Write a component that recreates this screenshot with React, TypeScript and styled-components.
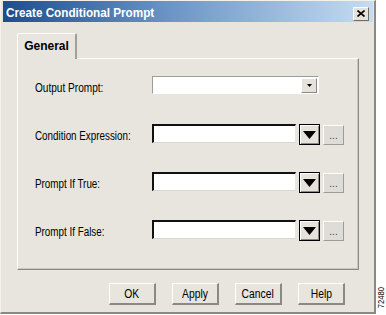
import React from "react";
import styled, { createGlobalStyle } from "styled-components";

const Global = createGlobalStyle`
  html, body { margin: 0; padding: 0; background: #fff; }
  #root { width: 386px; height: 315px; overflow: hidden; }
`;

const sans = `"Liberation Sans", Arial, sans-serif`;

const Page = styled.div`
  display: flex;
  width: 386px;
  height: 315px;
  background: #fff;
`;

const Window = styled.div`
  box-sizing: border-box;
  width: 376px;
  height: 314px;
  background: #e7e5dd;
  border-top: 1px solid #f2f1ec;
  border-left: 1px solid #f2f1ec;
  border-right: 2px solid #8a8984;
  border-bottom: 2px solid #8a8984;
  padding: 0 1px 0 2px;
  display: flex;
  flex-direction: column;
`;

const TitleBar = styled.div`
  height: 21px;
  display: flex;
  align-items: center;
  justify-content: space-between;
  padding: 0 4px 0 3px;
  background: linear-gradient(to right, #1d4d8c 0%, #6b95c6 45%, #c6dcf1 100%);
`;

/* the screenshot is squeezed sideways, so the text is too */
const Squeeze = styled.span<{ $k: number; $origin?: string }>`
  display: inline-block;
  white-space: nowrap;
  transform: scaleX(${(p) => p.$k});
  transform-origin: ${(p) => p.$origin ?? "left"} center;
`;

const Title = styled.span`
  font-family: ${sans};
  font-weight: bold;
  font-size: 13px;
  color: #fff;
  padding-top: 1px;
`;

const CloseBtn = styled.div`
  box-sizing: border-box;
  width: 16px;
  height: 14px;
  margin-top: 4px;
  background: #e4e2da;
  border-top: 1px solid #fff;
  border-left: 1px solid #fff;
  border-right: 1px solid #6e6d68;
  border-bottom: 1px solid #6e6d68;
  display: flex;
  align-items: center;
  justify-content: center;
`;

const Body = styled.div`
  padding: 11px 0 0 14px;
  display: flex;
  flex-direction: column;
`;

const TabStrip = styled.div`
  display: flex;
  height: 25px;
`;

const Tab = styled.div`
  box-sizing: border-box;
  width: 60px;
  height: 26px;
  margin-bottom: -1px;
  background: #e7e5dd;
  border-top: 1px solid #fff;
  border-left: 1px solid #fff;
  border-right: 2px solid #a09f9a;
  border-radius: 2px 2px 0 0;
  position: relative;
  z-index: 1;
  font-family: ${sans};
  font-weight: bold;
  font-size: 12px;
  color: #000;
  display: flex;
  align-items: center;
  justify-content: center;
  padding-bottom: 1px;
`;

const Panel = styled.div`
  box-sizing: border-box;
  width: 342px;
  height: 212px;
  border-top: 1px solid #fff;
  border-left: 1px solid #fff;
  border-right: 1px solid #8a8984;
  border-bottom: 1px solid #8a8984;
  box-shadow: inset -1px -1px 0 #c9c7bf;
  padding: 17px 0 0 17px;
  display: flex;
  flex-direction: column;
  gap: 29px;
`;

const Row = styled.div`
  display: flex;
  align-items: flex-start;
  height: 19px;
`;

const Label = styled.div`
  width: 117px;
  padding-top: 5px;
  font-family: ${sans};
  font-size: 12px;
  line-height: 14px;
  color: #000;
`;

const Combo = styled.div`
  box-sizing: border-box;
  width: 167px;
  height: 18px;
  background: #fff;
  border-top: 1px solid #9d9c97;
  border-left: 1px solid #9d9c97;
  border-right: 1px solid #fff;
  border-bottom: 1px solid #fff;
  display: flex;
  justify-content: flex-end;
  padding: 0 1px;
  align-items: center;
`;

const SmallDrop = styled.div`
  box-sizing: border-box;
  width: 16px;
  height: 15px;
  background: #e4e2da;
  border-top: 1px solid #fff;
  border-left: 1px solid #fff;
  border-right: 1px solid #8a8984;
  border-bottom: 1px solid #8a8984;
  display: flex;
  align-items: center;
  justify-content: center;
`;

const TextBox = styled.div`
  box-sizing: border-box;
  width: 144px;
  height: 19px;
  background: #fff;
  border-top: 2px solid #111;
  border-left: 2px solid #111;
  border-right: 1px solid #e7e5dd;
  border-bottom: 1px solid #d8d6ce;
`;

const BigDrop = styled.div`
  box-sizing: border-box;
  width: 21px;
  height: 21px;
  margin-left: 3px;
  background: #e4e2da;
  border: 1px solid #000;
  box-shadow: inset 1px 1px 0 #fff, inset -1px -1px 0 #8a8984;
  display: flex;
  align-items: center;
  justify-content: center;
`;

const Ellipsis = styled.div`
  box-sizing: border-box;
  width: 21px;
  height: 20px;
  margin-left: 3px;
  margin-top: 1px;
  background: #dddcd6;
  border-top: 1px solid #fff;
  border-left: 1px solid #fff;
  border-right: 1px solid #9d9c97;
  border-bottom: 1px solid #9d9c97;
  font-family: ${sans};
  font-size: 10px;
  color: #444;
  display: flex;
  justify-content: center;
  align-items: flex-end;
  line-height: 12px;
  padding-bottom: 2px;
`;

const Buttons = styled.div`
  display: flex;
  gap: 16px;
  width: 342px;
  justify-content: flex-end;
  padding-right: 14px;
  box-sizing: border-box;
  margin-top: 13px;
`;

const Button = styled.div`
  box-sizing: border-box;
  width: 47px;
  height: 22px;
  background: #e7e5dd;
  border-top: 1px solid #fff;
  border-left: 1px solid #fff;
  border-right: 2px solid #8a8984;
  border-bottom: 2px solid #8a8984;
  font-family: ${sans};
  font-size: 12px;
  color: #000;
  display: flex;
  align-items: center;
  justify-content: center;
`;

const Side = styled.div`
  flex: 1;
  display: flex;
  align-items: flex-end;
  justify-content: center;
  padding-bottom: 5px;
`;

const Code = styled.span`
  writing-mode: vertical-rl;
  transform: rotate(180deg) scaleY(0.85);
  font-family: ${sans};
  font-size: 9px;
  color: #000;
`;

const Tri = ({ w, h }: { w: number; h: number }) => (
  <svg width={w} height={h} viewBox={`0 0 ${w} ${h}`}>
    <polygon points={`0,0 ${w},0 ${w / 2},${h}`} fill="#000" />
  </svg>
);

const rows = ["Condition Expression:", "Prompt If True:", "Prompt If False:"];
const buttons = ["OK", "Apply", "Cancel", "Help"];

export default function App() {
  return (
    <Page>
      <Global />
      <Window>
        <TitleBar>
          <Title>
            <Squeeze $k={0.9}>Create Conditional Prompt</Squeeze>
          </Title>
          <CloseBtn>
            <svg width="8" height="7" viewBox="0 0 8 7">
              <path d="M0.5 0.5 L7.5 6.5 M7.5 0.5 L0.5 6.5" stroke="#000" strokeWidth="1.6" />
            </svg>
          </CloseBtn>
        </TitleBar>
        <Body>
          <TabStrip>
            <Tab>General</Tab>
          </TabStrip>
          <Panel>
            <Row>
              <Label>
                <Squeeze $k={0.84}>Output Prompt:</Squeeze>
              </Label>
              <Combo>
                <SmallDrop>
                  <Tri w={5} h={3} />
                </SmallDrop>
              </Combo>
            </Row>
            {rows.map((r) => (
              <Row key={r}>
                <Label>
                  <Squeeze $k={0.82}>{r}</Squeeze>
                </Label>
                <TextBox />
                <BigDrop>
                  <Tri w={13} h={8} />
                </BigDrop>
                <Ellipsis>...</Ellipsis>
              </Row>
            ))}
          </Panel>
          <Buttons>
            {buttons.map((b) => (
              <Button key={b}>
                <Squeeze $k={0.86} $origin="center">
                  {b}
                </Squeeze>
              </Button>
            ))}
          </Buttons>
        </Body>
      </Window>
      <Side>
        <Code>72480</Code>
      </Side>
    </Page>
  );
}
